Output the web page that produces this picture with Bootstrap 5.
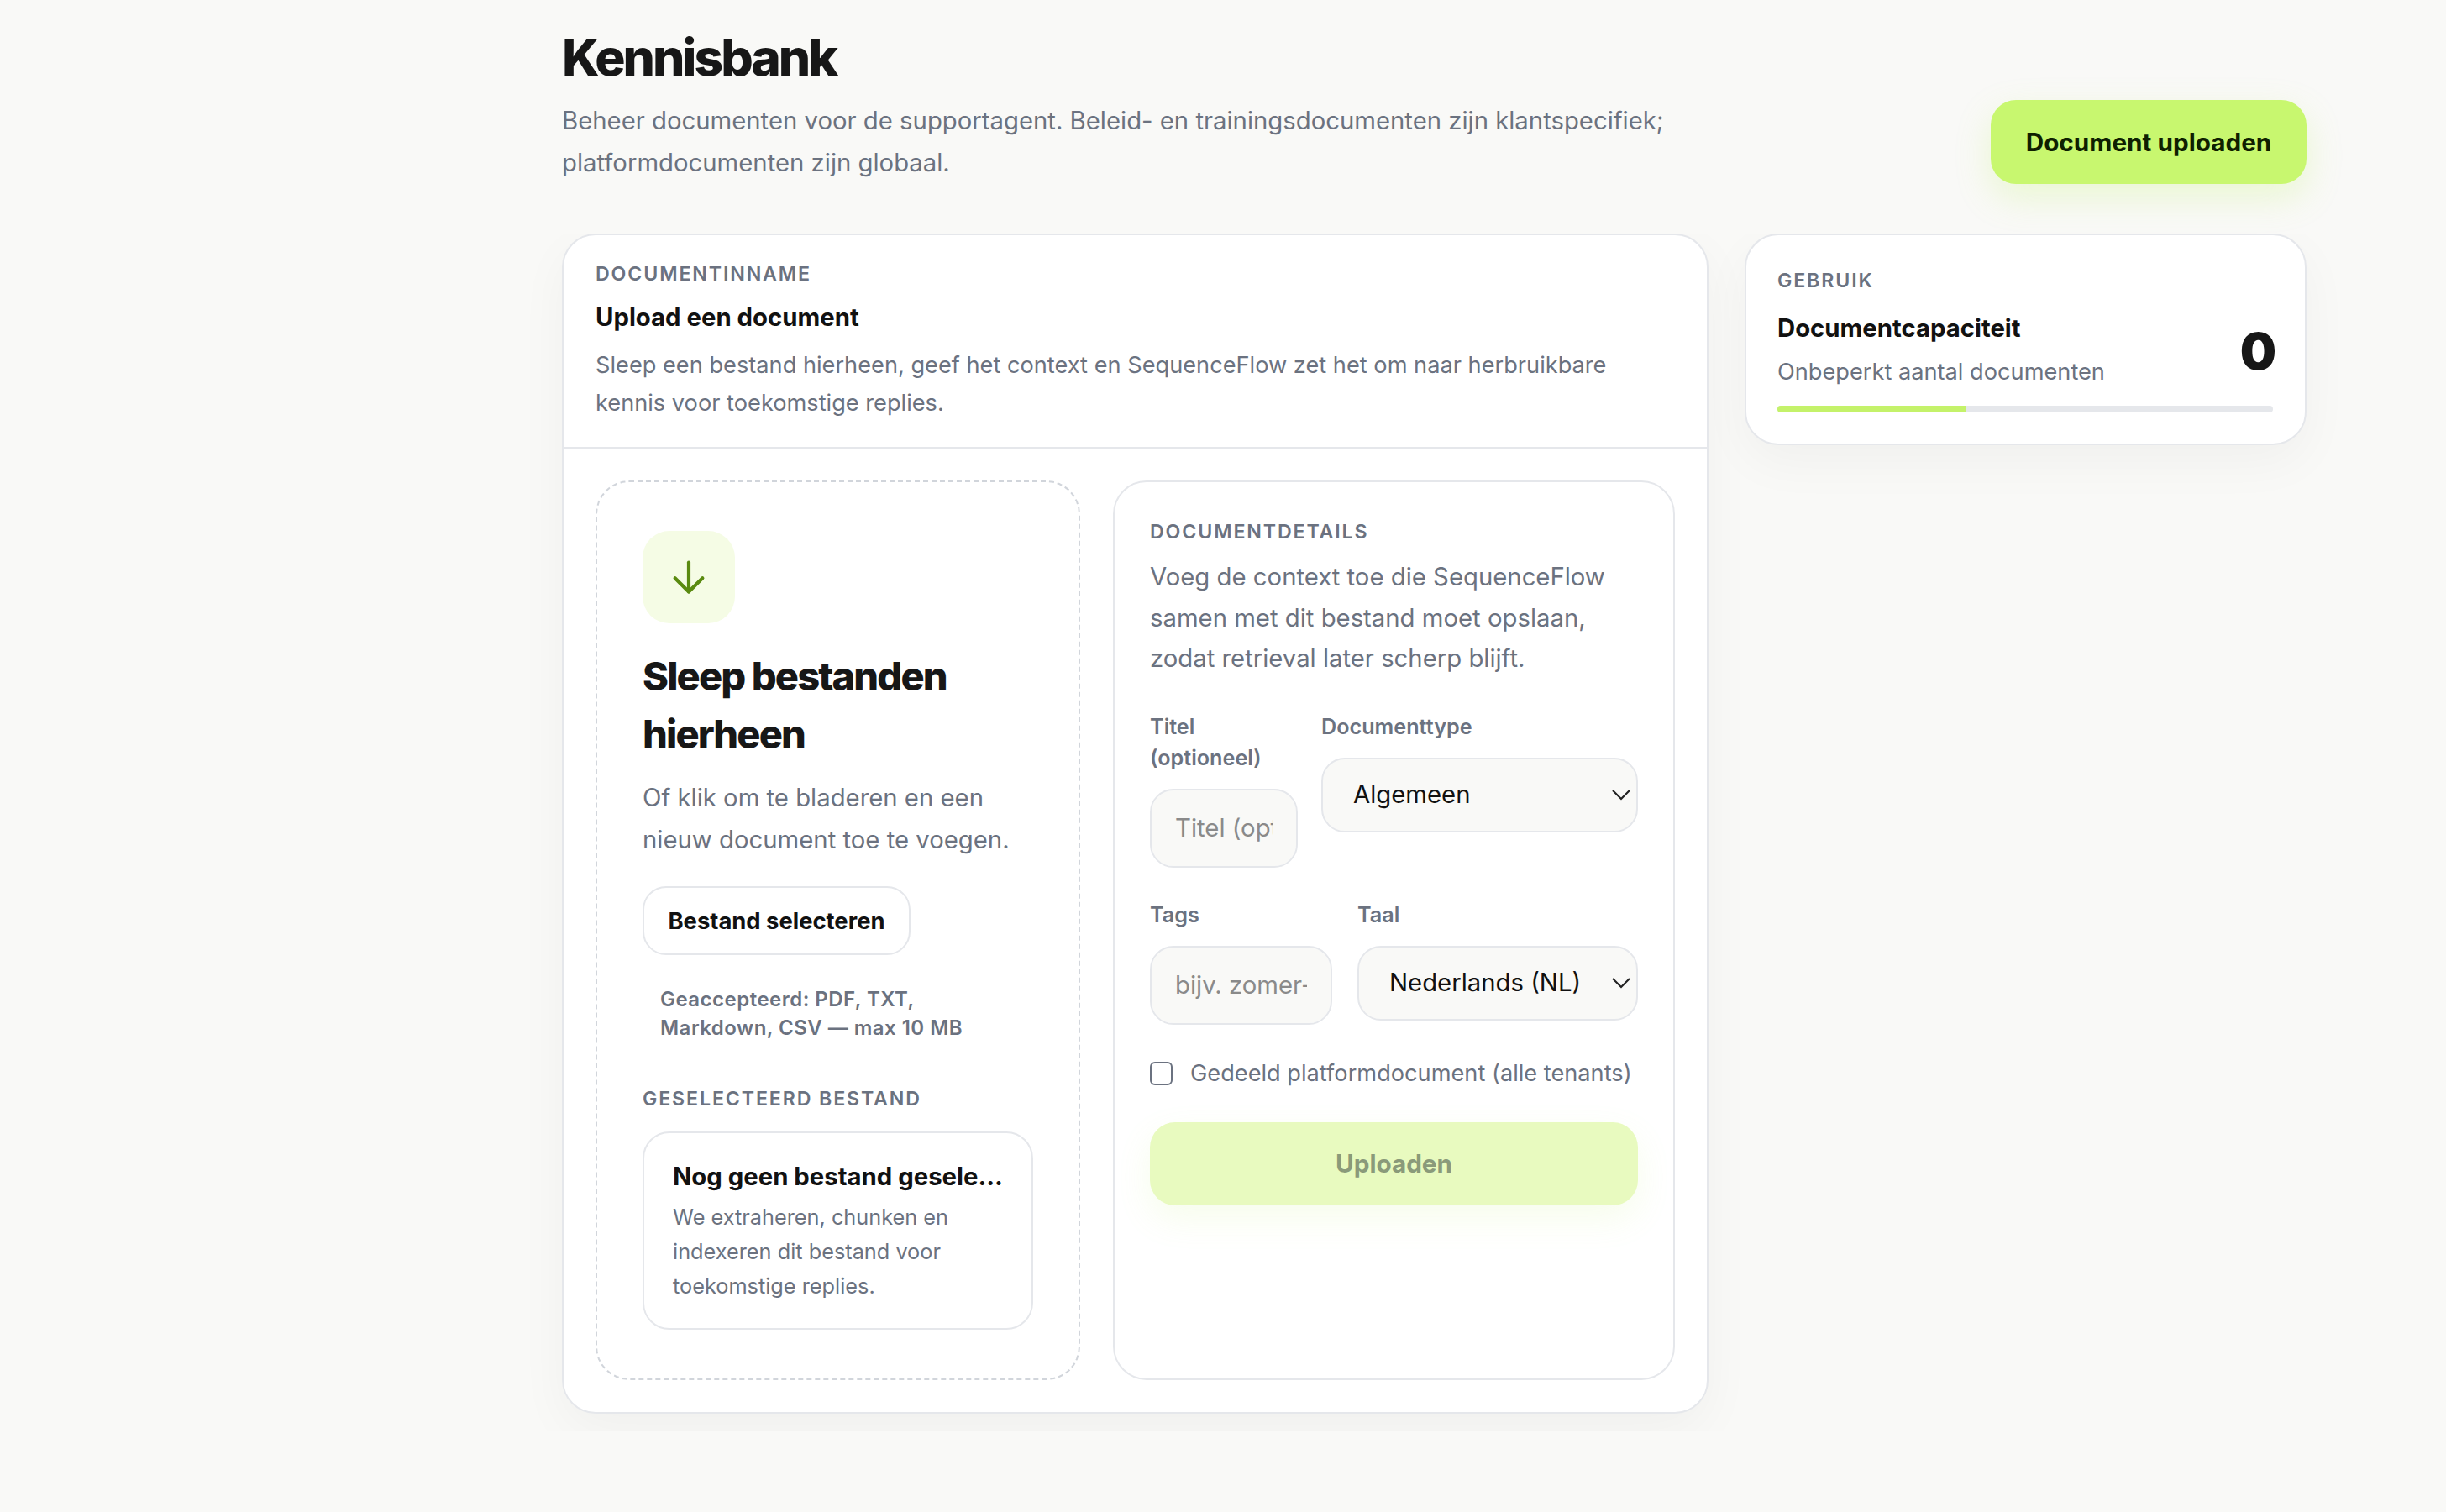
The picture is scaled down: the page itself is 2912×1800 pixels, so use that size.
<!DOCTYPE html>
<html lang="nl">
<head>
<meta charset="utf-8">
<title>Kennisbank</title>
<link href="https://cdn.jsdelivr.net/npm/bootstrap@5.3.0/dist/css/bootstrap.min.css" rel="stylesheet">
<style>
html,body{height:100%}
body{background:#f9f9f7;font-family:Inter,"Noto Sans",sans-serif;color:#171717;margin:0}
.kb-page{padding:0 166px 0 669px}
.kb-head{height:219px;margin-bottom:59px}
.kb-title{font-size:60.5px;font-weight:800;letter-spacing:-.05em;line-height:1.2;margin:0 0 14px;padding-top:26px;color:#171717}
.kb-sub{font-size:29.3px;line-height:50px;color:#6b7280;margin:0;max-width:1360px}
.kb-cta{background:#c8f76f;border:0;border-radius:30px;height:100px;width:376px;font-size:29.7px;font-weight:700;color:#0f1f00;box-shadow:0 16px 40px rgba(190,242,100,.25)}
.kb-clip{overflow:hidden;margin:0 -166px 0 -39px;padding:0 166px 20px 39px;height:1425px}
.kb-grid{gap:43px}
.kb-main{width:1365px;background:#fff;border:2px solid #e5e7eb;border-radius:40px;box-shadow:0 20px 60px rgba(0,0,0,.04);overflow:hidden;flex:none}
.kb-side{width:669px;height:252px;background:#fff;border:2px solid #e5e7eb;border-radius:40px;box-shadow:0 20px 60px rgba(0,0,0,.04);padding:37px 38px 32px 37px;flex:none}
.kb-main-head{padding:29px 38px 20px;border-bottom:2px solid #e5e7eb;height:254px}
.kb-eyebrow{font-size:23.2px;font-weight:600;letter-spacing:.08em;text-transform:uppercase;color:#6b7280;line-height:34px}
.kb-h2{font-size:29.3px;font-weight:700;line-height:40px;margin:15px 0 14px;color:#111}
.kb-desc{font-size:27.2px;line-height:45px;color:#6b7280;margin:0}
.kb-main-body{padding:38px 38px 38px 38px;gap:39px}
.kb-drop{width:577px;height:1071px;border:2px dashed #d1d5db;border-radius:40px;padding:58px 54px;flex:none}
.kb-icon{width:110px;height:110px;border-radius:32px;background:#f5fce5;color:#4d7c0f}
.kb-drop-h{font-size:47px;font-weight:800;line-height:69px;letter-spacing:-.04em;margin:28px 0 17px;color:#171717}
.kb-drop-p{font-size:29.3px;line-height:50px;color:#6b7280;margin:0 0 30px}
.kb-pick{background:#fff;border:2px solid #e5e7eb;border-radius:28px;height:82px;width:319px;padding:2px 0 0;font-size:27.4px;font-weight:700;color:#111}
.kb-accept{font-size:24px;font-weight:600;line-height:34px;letter-spacing:.02em;color:#6b7280;padding-left:21px;margin:36px 0 50px}
.kb-file{background:#fff;border:2px solid #e5e7eb;border-radius:32px;padding:32px 34px;margin-top:22px;height:236px}
.kb-file-t{font-size:29.3px;font-weight:700;line-height:40px;color:#111;white-space:nowrap;overflow:hidden;text-overflow:ellipsis}
.kb-file-d{font-size:25.3px;line-height:41px;color:#6b7280;margin:7px 0 0}
.kb-form{width:669px;height:1071px;background:#fff;border:2px solid #e5e7eb;border-radius:40px;padding:42px 42px;flex:none}
.kb-form-p{font-size:29.3px;line-height:48.5px;color:#6b7280;margin:13px 0 38px}
.kb-lbl{display:block;font-size:25.2px;font-weight:600;line-height:37px;color:#6b7280;margin:0 0 18px}
.kb-input.form-control,.kb-input.form-select{background-color:#f9f9f7;border:2px solid #e5e7eb;border-radius:28px;font-size:29.3px;padding:0 28px;color:#111;box-shadow:none}
.kb-input.form-control{height:94px}
.kb-input.form-select{height:89px;padding-left:36px;background-image:url("data:image/svg+xml,%3csvg xmlns='http://www.w3.org/2000/svg' viewBox='0 0 24 14'%3e%3cpath fill='none' stroke='%23222' stroke-width='2.2' d='M2 2l10 10 10-10'/%3e%3c/svg%3e");background-position:right 6px center;background-size:24px 14px}
.kb-input::placeholder{color:#8a8a8a}
.kb-row-a{gap:28px;margin-bottom:38px}
.kb-row-b{gap:30px}
.kb-f-a{width:176px;flex:none}
.kb-f-b{width:217px;flex:none}
.kb-check{margin:40px 0 40px;gap:21px}
.kb-check .form-check-input{width:27px;height:28px;margin:0;border:2px solid #6b7280;border-radius:6px;flex:none}
.kb-check label{font-size:27.2px;color:#6b7280;line-height:36px;white-space:nowrap}
.btn.kb-upload:disabled{background:#e8fabf;border:0;border-radius:30px;height:99px;width:100%;font-size:29.7px;font-weight:700;color:#8a9a7a;opacity:1;box-shadow:0 16px 40px rgba(190,242,100,.12)}
.kb-cap-t{font-size:29.3px;font-weight:700;line-height:40px;color:#111;margin-top:20px}
.kb-cap-s{font-size:27.2px;line-height:40px;color:#6b7280;margin-top:12px}
.kb-zero{font-size:61px;font-weight:900;line-height:1;color:#171717;margin:22px -4px 0 0}
.kb-bar{height:8px;background:#e5e7eb;border-radius:4px;margin-top:20px;overflow:hidden}
.kb-bar-fill{height:100%;background:#c4f26a}
</style>
</head>
<body>
<div class="kb-page">
  <header class="kb-head d-flex justify-content-between align-items-end">
    <div>
      <h1 class="kb-title">Kennisbank</h1>
      <p class="kb-sub">Beheer documenten voor de supportagent. Beleid- en trainingsdocumenten zijn klantspecifiek; platformdocumenten zijn globaal.</p>
    </div>
    <button type="button" class="btn kb-cta flex-shrink-0">Document uploaden</button>
  </header>
  <div class="kb-clip">
    <div class="d-flex align-items-start kb-grid">
      <section class="kb-main">
        <div class="kb-main-head">
          <div class="kb-eyebrow">Documentinname</div>
          <h2 class="kb-h2">Upload een document</h2>
          <p class="kb-desc">Sleep een bestand hierheen, geef het context en SequenceFlow zet het om naar herbruikbare kennis voor toekomstige replies.</p>
        </div>
        <div class="d-flex kb-main-body">
          <div class="kb-drop">
            <div class="kb-icon d-flex align-items-center justify-content-center">
              <svg width="56" height="56" viewBox="0 0 24 24" fill="none" stroke="#5a8a10" stroke-width="1.8" stroke-linecap="round" stroke-linejoin="round"><path d="M12 4.5v15"/><path d="M5 12.5l7 7 7-7"/></svg>
            </div>
            <h3 class="kb-drop-h">Sleep bestanden hierheen</h3>
            <p class="kb-drop-p">Of klik om te bladeren en een nieuw document toe te voegen.</p>
            <button type="button" class="btn kb-pick">Bestand selecteren</button>
            <div class="kb-accept">Geaccepteerd: PDF, TXT,<br>Markdown, CSV — max 10 MB</div>
            <div class="kb-eyebrow">Geselecteerd bestand</div>
            <div class="kb-file">
              <div class="kb-file-t">Nog geen bestand geselecteerd</div>
              <p class="kb-file-d">We extraheren, chunken en indexeren dit bestand voor toekomstige replies.</p>
            </div>
          </div>
          <form class="kb-form">
            <div class="kb-eyebrow">Documentdetails</div>
            <p class="kb-form-p">Voeg de context toe die SequenceFlow samen met dit bestand moet opslaan, zodat retrieval later scherp blijft.</p>
            <div class="d-flex align-items-start kb-row-a">
              <div class="kb-f-a">
                <label class="kb-lbl" for="f1">Titel (optioneel)</label>
                <input id="f1" class="form-control kb-input" placeholder="Titel (optioneel)">
              </div>
              <div class="flex-grow-1">
                <label class="kb-lbl" for="f2">Documenttype</label>
                <select id="f2" class="form-select kb-input"><option>Algemeen</option></select>
              </div>
            </div>
            <div class="d-flex align-items-start kb-row-b">
              <div class="kb-f-b">
                <label class="kb-lbl" for="f3">Tags</label>
                <input id="f3" class="form-control kb-input" placeholder="bijv. zomer-actie">
              </div>
              <div class="flex-grow-1">
                <label class="kb-lbl" for="f4">Taal</label>
                <select id="f4" class="form-select kb-input"><option>Nederlands (NL)</option></select>
              </div>
            </div>
            <div class="d-flex align-items-center kb-check">
              <input id="f5" class="form-check-input" type="checkbox">
              <label for="f5">Gedeeld platformdocument (alle tenants)</label>
            </div>
            <button type="button" class="btn kb-upload" disabled>Uploaden</button>
          </form>
        </div>
      </section>
      <aside class="kb-side">
        <div class="kb-eyebrow">Gebruik</div>
        <div class="d-flex justify-content-between align-items-center">
          <div>
            <div class="kb-cap-t">Documentcapaciteit</div>
            <div class="kb-cap-s">Onbeperkt aantal documenten</div>
          </div>
          <div class="kb-zero">0</div>
        </div>
        <div class="kb-bar"><div class="kb-bar-fill" style="width:38%"></div></div>
      </aside>
    </div>
  </div>
</div>
<script src="https://cdn.jsdelivr.net/npm/bootstrap@5.3.0/dist/js/bootstrap.bundle.min.js"></script>
</body>
</html>
